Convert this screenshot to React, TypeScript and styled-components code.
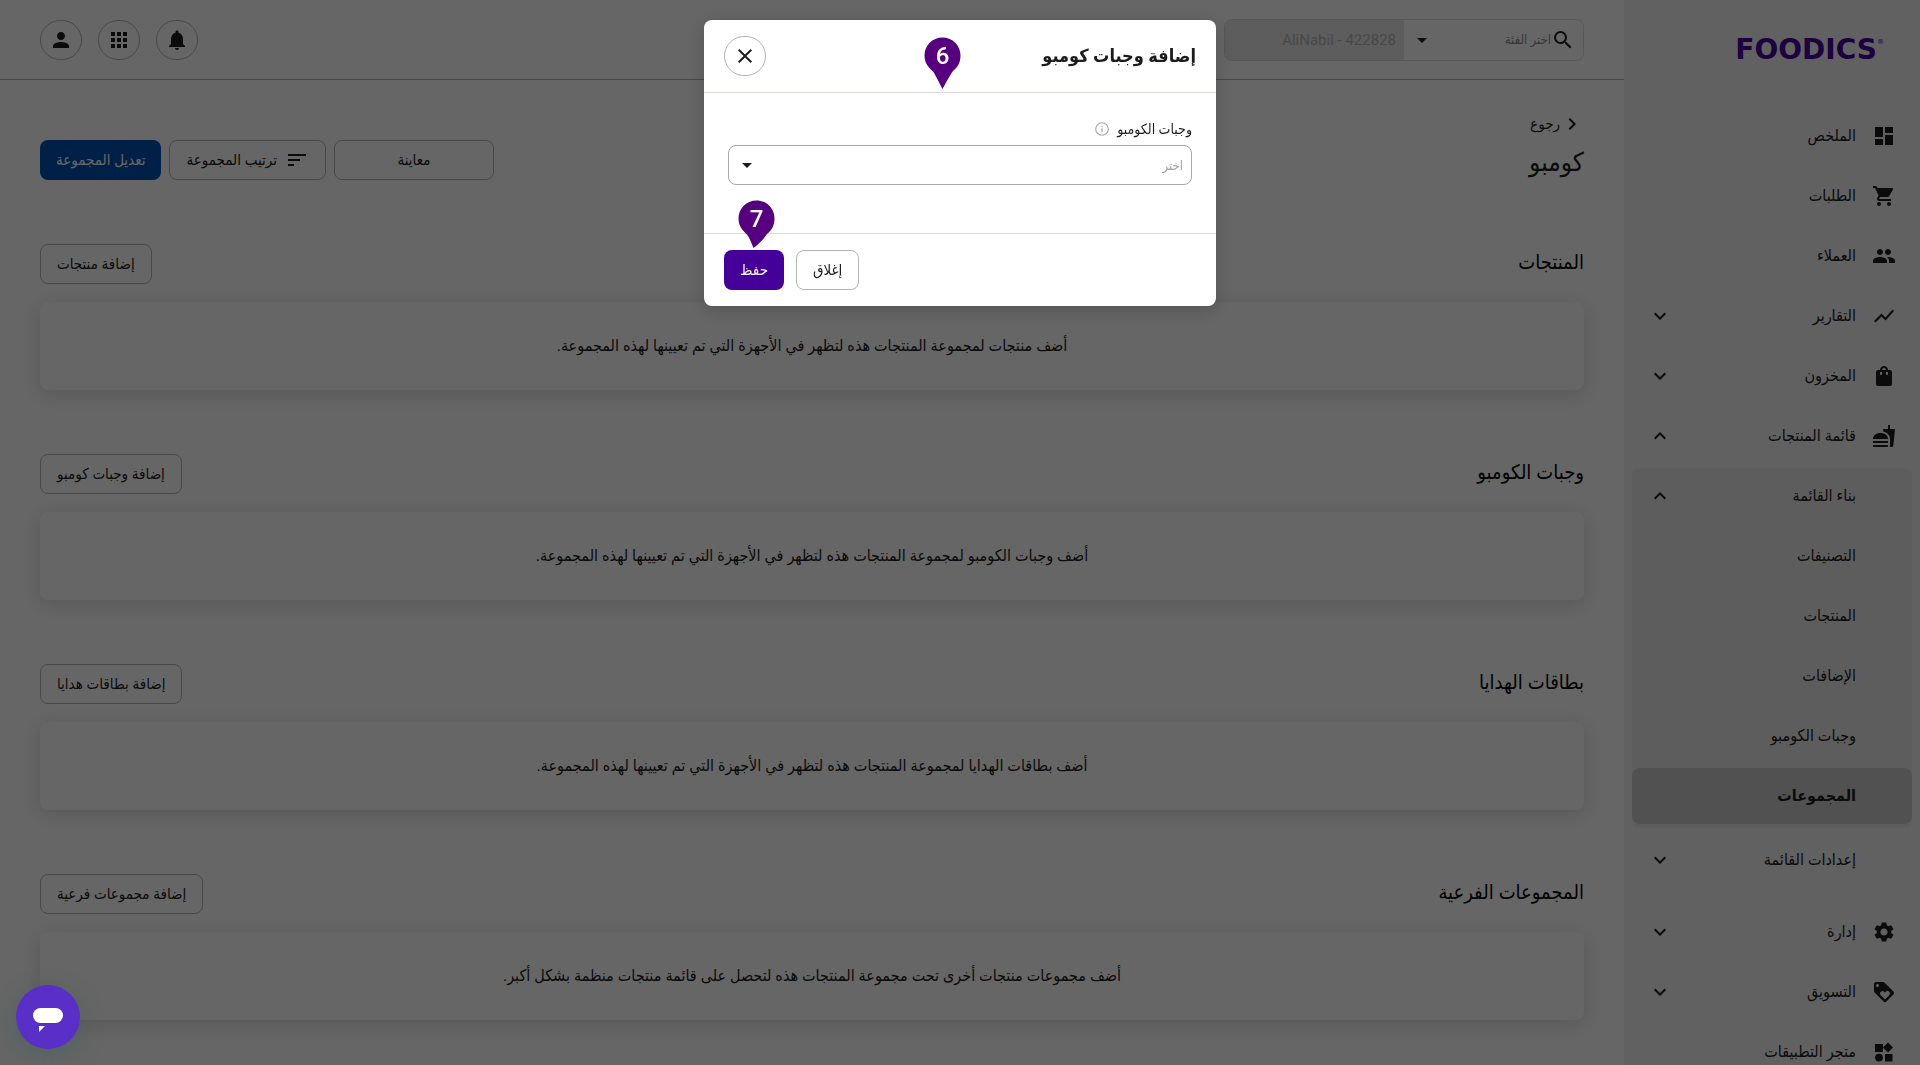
import React from "react";
import styled, { createGlobalStyle } from "styled-components";
import {
  MdApps,
  MdArrowDropDown,
  MdChevronRight,
  MdClose,
  MdDashboard,
  MdExpandLess,
  MdExpandMore,
  MdFastfood,
  MdLoyalty,
  MdNotifications,
  MdPeople,
  MdPerson,
  MdSearch,
  MdSettings,
  MdShoppingBag,
  MdShoppingCart,
  MdShowChart,
  MdSort,
} from "react-icons/md";

const FONT = `"Roboto", "DejaVu Sans Condensed", "DejaVu Sans", sans-serif`;
const INK = "#1c1c1c";
const LINE = "#b4b4b8";

const GlobalStyle = createGlobalStyle`
  *, *::before, *::after { box-sizing: border-box; }
  body {
    margin: 0;
    background: #fff;
    color: ${INK};
    font-family: ${FONT};
    overflow: hidden;
  }
  button, input, select { font-family: inherit; color: inherit; }
  h1, h2, p { margin: 0; }
`;

const Page = styled.div`
  display: grid;
  grid-template-columns: 296px minmax(0, 1fr);
  height: 100vh;
  overflow: hidden;
`;

/* ---------- sidebar ---------- */

const Sidebar = styled.aside`
  background: #f2f2f6;
  overflow: hidden;
`;

const Logo = styled.a`
  display: flex;
  direction: ltr;
  justify-content: flex-end;
  align-items: flex-start;
  height: 108px;
  padding: 32px 36px 0 0;
  color: #48009d;
  font-family: "DejaVu Sans", sans-serif;
  font-size: 28px;
  line-height: 36px;
  font-weight: 700;
  text-decoration: none;
`;

const Registered = styled.sup`
  font-size: 7px;
  line-height: 20px;
  font-weight: 400;
  vertical-align: top;
`;

const Nav = styled.nav`
  padding: 0 8px;
`;

const Group = styled.div`
  display: flow-root;
  margin-bottom: 12px;
`;

const SubGroup = styled.div`
  display: flow-root;
  background: #e8e8eb;
  border-radius: 8px;
  margin-bottom: 4px;
`;

const NavItem = styled.a<{ $active?: boolean }>`
  display: flex;
  align-items: center;
  gap: 16px;
  height: 56px;
  margin-bottom: 4px;
  padding: 0 16px;
  border-radius: 8px;
  color: ${INK};
  background: ${(p) => (p.$active ? "#cacacd" : "transparent")};
  font-size: 16px;
  line-height: 24px;
  font-weight: ${(p) => (p.$active ? 700 : 400)};
  text-decoration: none;
`;

const IconSlot = styled.span`
  display: flex;
  width: 24px;
  height: 24px;
  font-size: 24px;
`;

const NavLabel = styled.span`
  flex: 1;
`;

const Chevron = styled.span`
  display: flex;
  font-size: 24px;
`;

/* ---------- top bar ---------- */

const Main = styled.main`
  min-width: 0;
  overflow: hidden;
`;

const TopBar = styled.header`
  display: flex;
  align-items: center;
  justify-content: space-between;
  height: 80px;
  padding: 0 40px;
  border-bottom: 1px solid ${LINE};
`;

const SearchBox = styled.form`
  display: grid;
  grid-template-columns: 1fr 1fr;
  width: 360px;
  height: 42px;
  border: 1px solid #d9d9dc;
  border-radius: 8px;
  overflow: hidden;
`;

const SearchScope = styled.label`
  display: flex;
  align-items: center;
  padding: 0 8px 0 6px;
  font-size: 24px;
`;

const ScopeSelect = styled.select`
  flex: 1;
  min-width: 0;
  height: 40px;
  padding: 0;
  border: 0;
  background: transparent;
  appearance: none;
  color: #8a8a8e;
  font-size: 13px;
`;

const SearchInput = styled.input`
  min-width: 0;
  border: 0;
  padding: 0 8px;
  background: #e8e8e8;
  font-size: 15px;
  &::placeholder { color: #b4b4b4; opacity: 1; }
`;

const IconButtons = styled.div`
  display: flex;
  gap: 16px;
`;

const RoundButton = styled.button`
  display: flex;
  align-items: center;
  justify-content: center;
  width: 42px;
  height: 40px;
  padding: 0;
  border: 1px solid ${LINE};
  border-radius: 50px;
  background: transparent;
  color: ${INK};
  font-size: 24px;
  line-height: 24px;
`;

/* ---------- content ---------- */

const Content = styled.div`
  padding: 32px 40px 0;
`;

const PageHead = styled.div`
  display: flex;
  justify-content: space-between;
  align-items: flex-start;
  margin-bottom: 56px;
`;

const Titles = styled.div`
  display: flex;
  flex-direction: column;
  align-items: flex-start;
`;

const BackLink = styled.a`
  display: flex;
  align-items: center;
  height: 24px;
  color: ${INK};
  font-size: 15px;
  line-height: 24px;
  text-decoration: none;
  svg { font-size: 24px; }
`;

const PageTitle = styled.h1`
  font-size: 26px;
  line-height: 52px;
  font-weight: 400;
`;

const Actions = styled.div`
  display: flex;
  gap: 8px;
  padding-top: 28px;
`;

const Button = styled.button<{ $tone?: "blue" | "purple"; $wide?: boolean }>`
  display: flex;
  align-items: center;
  justify-content: center;
  gap: 8px;
  height: 40px;
  min-width: ${(p) => (p.$wide ? "160px" : "60px")};
  padding: 0 16px;
  border: ${(p) => (p.$tone ? "0" : `1px solid ${LINE}`)};
  border-radius: 8px;
  background: ${(p) => (p.$tone === "blue" ? "#0052b4" : p.$tone === "purple" ? "#440099" : "transparent")};
  color: ${(p) => (p.$tone ? "#fff" : INK)};
  font-size: 15px;
  line-height: 24px;
  svg { font-size: 24px; }
`;

const Section = styled.section`
  margin-bottom: 64px;
`;

const SectionHead = styled.div`
  display: flex;
  align-items: flex-start;
  justify-content: space-between;
  height: 40px;
  margin-bottom: 18px;
`;

const SectionTitle = styled.h2`
  color: #000;
  font-size: 20px;
  line-height: 36px;
  font-weight: 400;
`;

const Card = styled.div`
  display: flex;
  align-items: center;
  justify-content: center;
  height: 88px;
  border-radius: 8px;
  background: #fff;
  box-shadow: 0 4px 20px rgba(0, 0, 0, 0.15);
`;

const CardText = styled.p`
  font-size: 16px;
  line-height: 24px;
`;

/* ---------- modal ---------- */

const Backdrop = styled.div`
  position: fixed;
  inset: 0;
  display: flex;
  justify-content: center;
  align-items: flex-start;
  padding-top: 20px;
  background: rgba(0, 0, 0, 0.6);
`;

const Dialog = styled.div`
  position: relative;
  width: 512px;
  border-radius: 8px;
  background: #fff;
  box-shadow: 0 4px 20px rgba(0, 0, 0, 0.2);
`;

const DialogHead = styled.div`
  display: flex;
  align-items: center;
  justify-content: space-between;
  height: 73px;
  padding: 0 20px;
  border-bottom: 1px solid #d8d8e8;
`;

const DialogTitle = styled.h2`
  font-size: 18px;
  line-height: 32px;
  font-weight: 700;
`;

const DialogBody = styled.div`
  padding: 24px 24px 48px;
`;

const FieldLabel = styled.label`
  display: flex;
  align-items: center;
  gap: 8px;
  height: 24px;
  margin-bottom: 4px;
  font-size: 14px;
  line-height: 24px;
`;

const SelectBox = styled.div`
  display: grid;
  grid-template-columns: minmax(0, 1fr);
  align-items: center;
  svg {
    grid-area: 1 / 1;
    justify-self: end;
    margin-left: 7px;
    font-size: 24px;
    pointer-events: none;
  }
`;

const Select = styled.select`
  grid-area: 1 / 1;
  width: 100%;
  height: 40px;
  padding: 0 8px;
  border: 1px solid #a8a8ac;
  border-radius: 8px;
  background: #fff;
  appearance: none;
  color: #a0a0a4;
  font-size: 13px;
`;

const DialogFoot = styled.div`
  display: flex;
  flex-direction: row-reverse;
  gap: 12px;
  padding: 16px 20px;
  border-top: 1px solid #d8d8e8;
`;

const Pin = styled.svg<{ $x: number; $y: number }>`
  position: absolute;
  left: ${(p) => p.$x}px;
  top: ${(p) => p.$y}px;
  width: 38px;
  height: 54px;
  text {
    fill: #fff;
    font-family: "Roboto", sans-serif;
    font-size: 24px;
    font-weight: 500;
    text-anchor: middle;
  }
`;

const ChatButton = styled.button`
  position: fixed;
  left: 16px;
  bottom: 16px;
  width: 64px;
  height: 64px;
  padding: 0;
  border: 0;
  border-radius: 50%;
  background: #5a2fc8;
  box-shadow: 0 8px 24px rgba(60, 90, 90, 0.45);
`;

function InfoIcon() {
  return (
    <svg width="14" height="14" viewBox="0 0 14 14" fill="none" stroke="#a3a3a3" aria-hidden="true">
      <circle cx="7" cy="7" r="6.3" strokeWidth="1.1" />
      <path d="M7 6.2v4M7 3.7v1.2" strokeWidth="1.2" />
    </svg>
  );
}

function AppStoreIcon() {
  return (
    <svg width="24" height="24" viewBox="0 0 24 24" fill="currentColor" aria-hidden="true">
      <path d="M3 4h8v8H3zM13 14h7.5v7.5H13zM16 2.5l5 5-5 5-5-5z" />
      <circle cx="7" cy="17.6" r="3.9" />
    </svg>
  );
}

type PinMarkProps = { n: string; x: number; y: number; tip: number; depth: number };

function PinMark({ n, x, y, tip, depth }: PinMarkProps) {
  return (
    <Pin $x={x} $y={y} viewBox="0 0 38 54">
      <path
        fill="#560080"
        d={`M18.5 0.5C8.3 0.5 0.5 8.5 0.5 18.5C0.5 26 5 31 8.5 34C11 36.5 13 42 ${tip} ${depth}C24 42 27 36.5 29 34C33 31 36.5 26 36.5 18.5C36.5 8.5 28.7 0.5 18.5 0.5Z`}
      />
      <text x="18.5" y="27">{n}</text>
    </Pin>
  );
}

type ItemProps = {
  label: string;
  icon?: React.ReactNode;
  arrow?: "down" | "up";
  active?: boolean;
};

function Item({ label, icon, arrow, active }: ItemProps) {
  return (
    <NavItem href="#" $active={active} aria-current={active ? "page" : undefined}>
      <IconSlot>{icon}</IconSlot>
      <NavLabel>{label}</NavLabel>
      {arrow && <Chevron>{arrow === "down" ? <MdExpandMore /> : <MdExpandLess />}</Chevron>}
    </NavItem>
  );
}

const sections = [
  {
    title: "المنتجات",
    action: "إضافة منتجات",
    text: "أضف منتجات لمجموعة المنتجات هذه لتظهر في الأجهزة التي تم تعيينها لهذه المجموعة.",
  },
  {
    title: "وجبات الكومبو",
    action: "إضافة وجبات كومبو",
    text: "أضف وجبات الكومبو لمجموعة المنتجات هذه لتظهر في الأجهزة التي تم تعيينها لهذه المجموعة.",
  },
  {
    title: "بطاقات الهدايا",
    action: "إضافة بطاقات هدايا",
    text: "أضف بطاقات الهدايا لمجموعة المنتجات هذه لتظهر في الأجهزة التي تم تعيينها لهذه المجموعة.",
  },
  {
    title: "المجموعات الفرعية",
    action: "إضافة مجموعات فرعية",
    text: "أضف مجموعات منتجات أخرى تحت مجموعة المنتجات هذه لتحصل على قائمة منتجات منظمة بشكل أكبر.",
  },
];

export default function App() {
  return (
    <>
      <GlobalStyle />
      <Page dir="rtl" lang="ar">
        <Sidebar>
          <Logo href="#">
            FOODICS<Registered>®</Registered>
          </Logo>
          <Nav>
            <Item label="الملخص" icon={<MdDashboard />} />
            <Item label="الطلبات" icon={<MdShoppingCart />} />
            <Item label="العملاء" icon={<MdPeople />} />
            <Item label="التقارير" icon={<MdShowChart />} arrow="down" />
            <Item label="المخزون" icon={<MdShoppingBag />} arrow="down" />
            <Group>
              <Item label="قائمة المنتجات" icon={<MdFastfood />} arrow="up" />
              <SubGroup>
                <Item label="بناء القائمة" arrow="up" />
                <Item label="التصنيفات" />
                <Item label="المنتجات" />
                <Item label="الإضافات" />
                <Item label="وجبات الكومبو" />
                <Item label="المجموعات" active />
              </SubGroup>
              <Item label="إعدادات القائمة" arrow="down" />
            </Group>
            <Item label="إدارة" icon={<MdSettings />} arrow="down" />
            <Item label="التسويق" icon={<MdLoyalty />} arrow="down" />
            <Item label="متجر التطبيقات" icon={<AppStoreIcon />} />
          </Nav>
        </Sidebar>

        <Main>
          <TopBar>
            <SearchBox>
              <SearchScope>
                <MdSearch />
                <ScopeSelect aria-label="اختر الفئة" defaultValue="">
                  <option value="">اختر الفئة</option>
                </ScopeSelect>
                <MdArrowDropDown />
              </SearchScope>
              <SearchInput aria-label="AliNabil - 422828" placeholder="AliNabil - 422828" disabled />
            </SearchBox>
            <IconButtons>
              <RoundButton type="button" aria-label="الإشعارات"><MdNotifications /></RoundButton>
              <RoundButton type="button" aria-label="التطبيقات"><MdApps /></RoundButton>
              <RoundButton type="button" aria-label="الحساب"><MdPerson /></RoundButton>
            </IconButtons>
          </TopBar>

          <Content>
            <PageHead>
              <Titles>
                <BackLink href="#"><MdChevronRight />رجوع</BackLink>
                <PageTitle>كومبو</PageTitle>
              </Titles>
              <Actions>
                <Button type="button" $wide>معاينة</Button>
                <Button type="button"><MdSort />ترتيب المجموعة</Button>
                <Button type="button" $tone="blue">تعديل المجموعة</Button>
              </Actions>
            </PageHead>

            {sections.map((s) => (
              <Section key={s.title}>
                <SectionHead>
                  <SectionTitle>{s.title}</SectionTitle>
                  <Button type="button">{s.action}</Button>
                </SectionHead>
                <Card><CardText>{s.text}</CardText></Card>
              </Section>
            ))}
          </Content>
        </Main>
      </Page>

      <Backdrop dir="rtl" lang="ar">
        <Dialog role="dialog" aria-modal="true" aria-labelledby="combo-title">
          <DialogHead>
            <DialogTitle id="combo-title">إضافة وجبات كومبو</DialogTitle>
            <RoundButton type="button" aria-label="إغلاق"><MdClose /></RoundButton>
          </DialogHead>
          <DialogBody>
            <FieldLabel htmlFor="combo-select">
              وجبات الكومبو
              <InfoIcon />
            </FieldLabel>
            <SelectBox>
              <Select id="combo-select" defaultValue="">
                <option value="">اختر</option>
              </Select>
              <MdArrowDropDown />
            </SelectBox>
          </DialogBody>
          <DialogFoot>
            <Button type="button" $tone="purple">حفظ</Button>
            <Button type="button">إغلاق</Button>
          </DialogFoot>
          <PinMark n="6" x={220} y={17} tip={18.5} depth={52} />
          <PinMark n="7" x={34} y={180} tip={15.5} depth={48} />
        </Dialog>
      </Backdrop>

      <ChatButton type="button" aria-label="محادثة">
        <svg width="64" height="64" viewBox="0 0 64 64" fill="#fff" aria-hidden="true">
          <rect x="17" y="23" width="30" height="15" rx="7.5" />
          <path d="M23 41h6l-6 6z" />
        </svg>
      </ChatButton>
    </>
  );
}
